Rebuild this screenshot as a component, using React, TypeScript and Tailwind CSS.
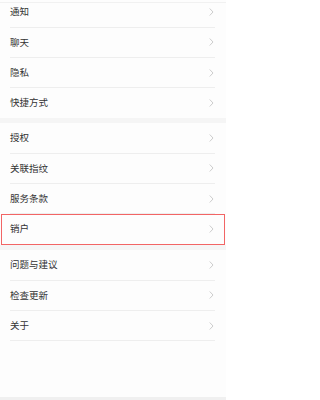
const sections: string[][] = [
  ['通知', '聊天', '隐私', '快捷方式'],
  ['授权', '关联指纹', '服务条款', '销户'],
  ['问题与建议', '检查更新', '关于'],
]

function Chevron() {
  return (
    <svg width="5" height="8" viewBox="0 0 5 8" fill="none" className="shrink-0">
      <polyline points="1,0.8 4,4 1,7.2" stroke="#c6c6c6" strokeWidth="0.9" strokeLinecap="round" strokeLinejoin="round" />
    </svg>
  )
}

function Row({ label }: { label: string }) {
  return (
    <div className="flex h-[29.33px] items-center justify-between pl-[10px] pr-[12.5px]">
      <span className="text-[9.5px] leading-none text-[#333333]">{label}</span>
      <Chevron />
    </div>
  )
}

function Divider() {
  return <div className="ml-[10px] mr-[11px] h-px bg-[#eeeeee]" />
}

export default function App() {
  return (
    <div
      className="relative h-[400px] w-[226px] overflow-hidden bg-[#fdfdfd]"
      style={{ fontFamily: '"Noto Sans CJK SC", "Noto Sans", sans-serif' }}
    >
      <div className="absolute inset-x-0 top-[2px] h-px bg-[#f1f1f1]" />
      <div className="mt-[-2.67px] flex flex-col">
        {sections.map((items, si) => (
          <div key={si} className="flex flex-col">
            {si > 0 && <div className="h-[5.67px] bg-[#f5f5f5]" />}
            {items.map((label, i) => {
              const last = i === items.length - 1
              const showDivider = !last || si > 0
              if (label === '销户') {
                return (
                  <div key={label} className="relative">
                    <Row label={label} />
                    <Divider />
                    <div className="pointer-events-none absolute inset-y-0 left-px right-px border-[1.5px] border-[#f26565]" />
                  </div>
                )
              }
              return (
                <div key={label}>
                  <Row label={label} />
                  {showDivider && <Divider />}
                </div>
              )
            })}
          </div>
        ))}
      </div>
      <div className="absolute inset-x-0 bottom-0 h-[3.3px] bg-[#f0f0f0]" />
    </div>
  )
}
